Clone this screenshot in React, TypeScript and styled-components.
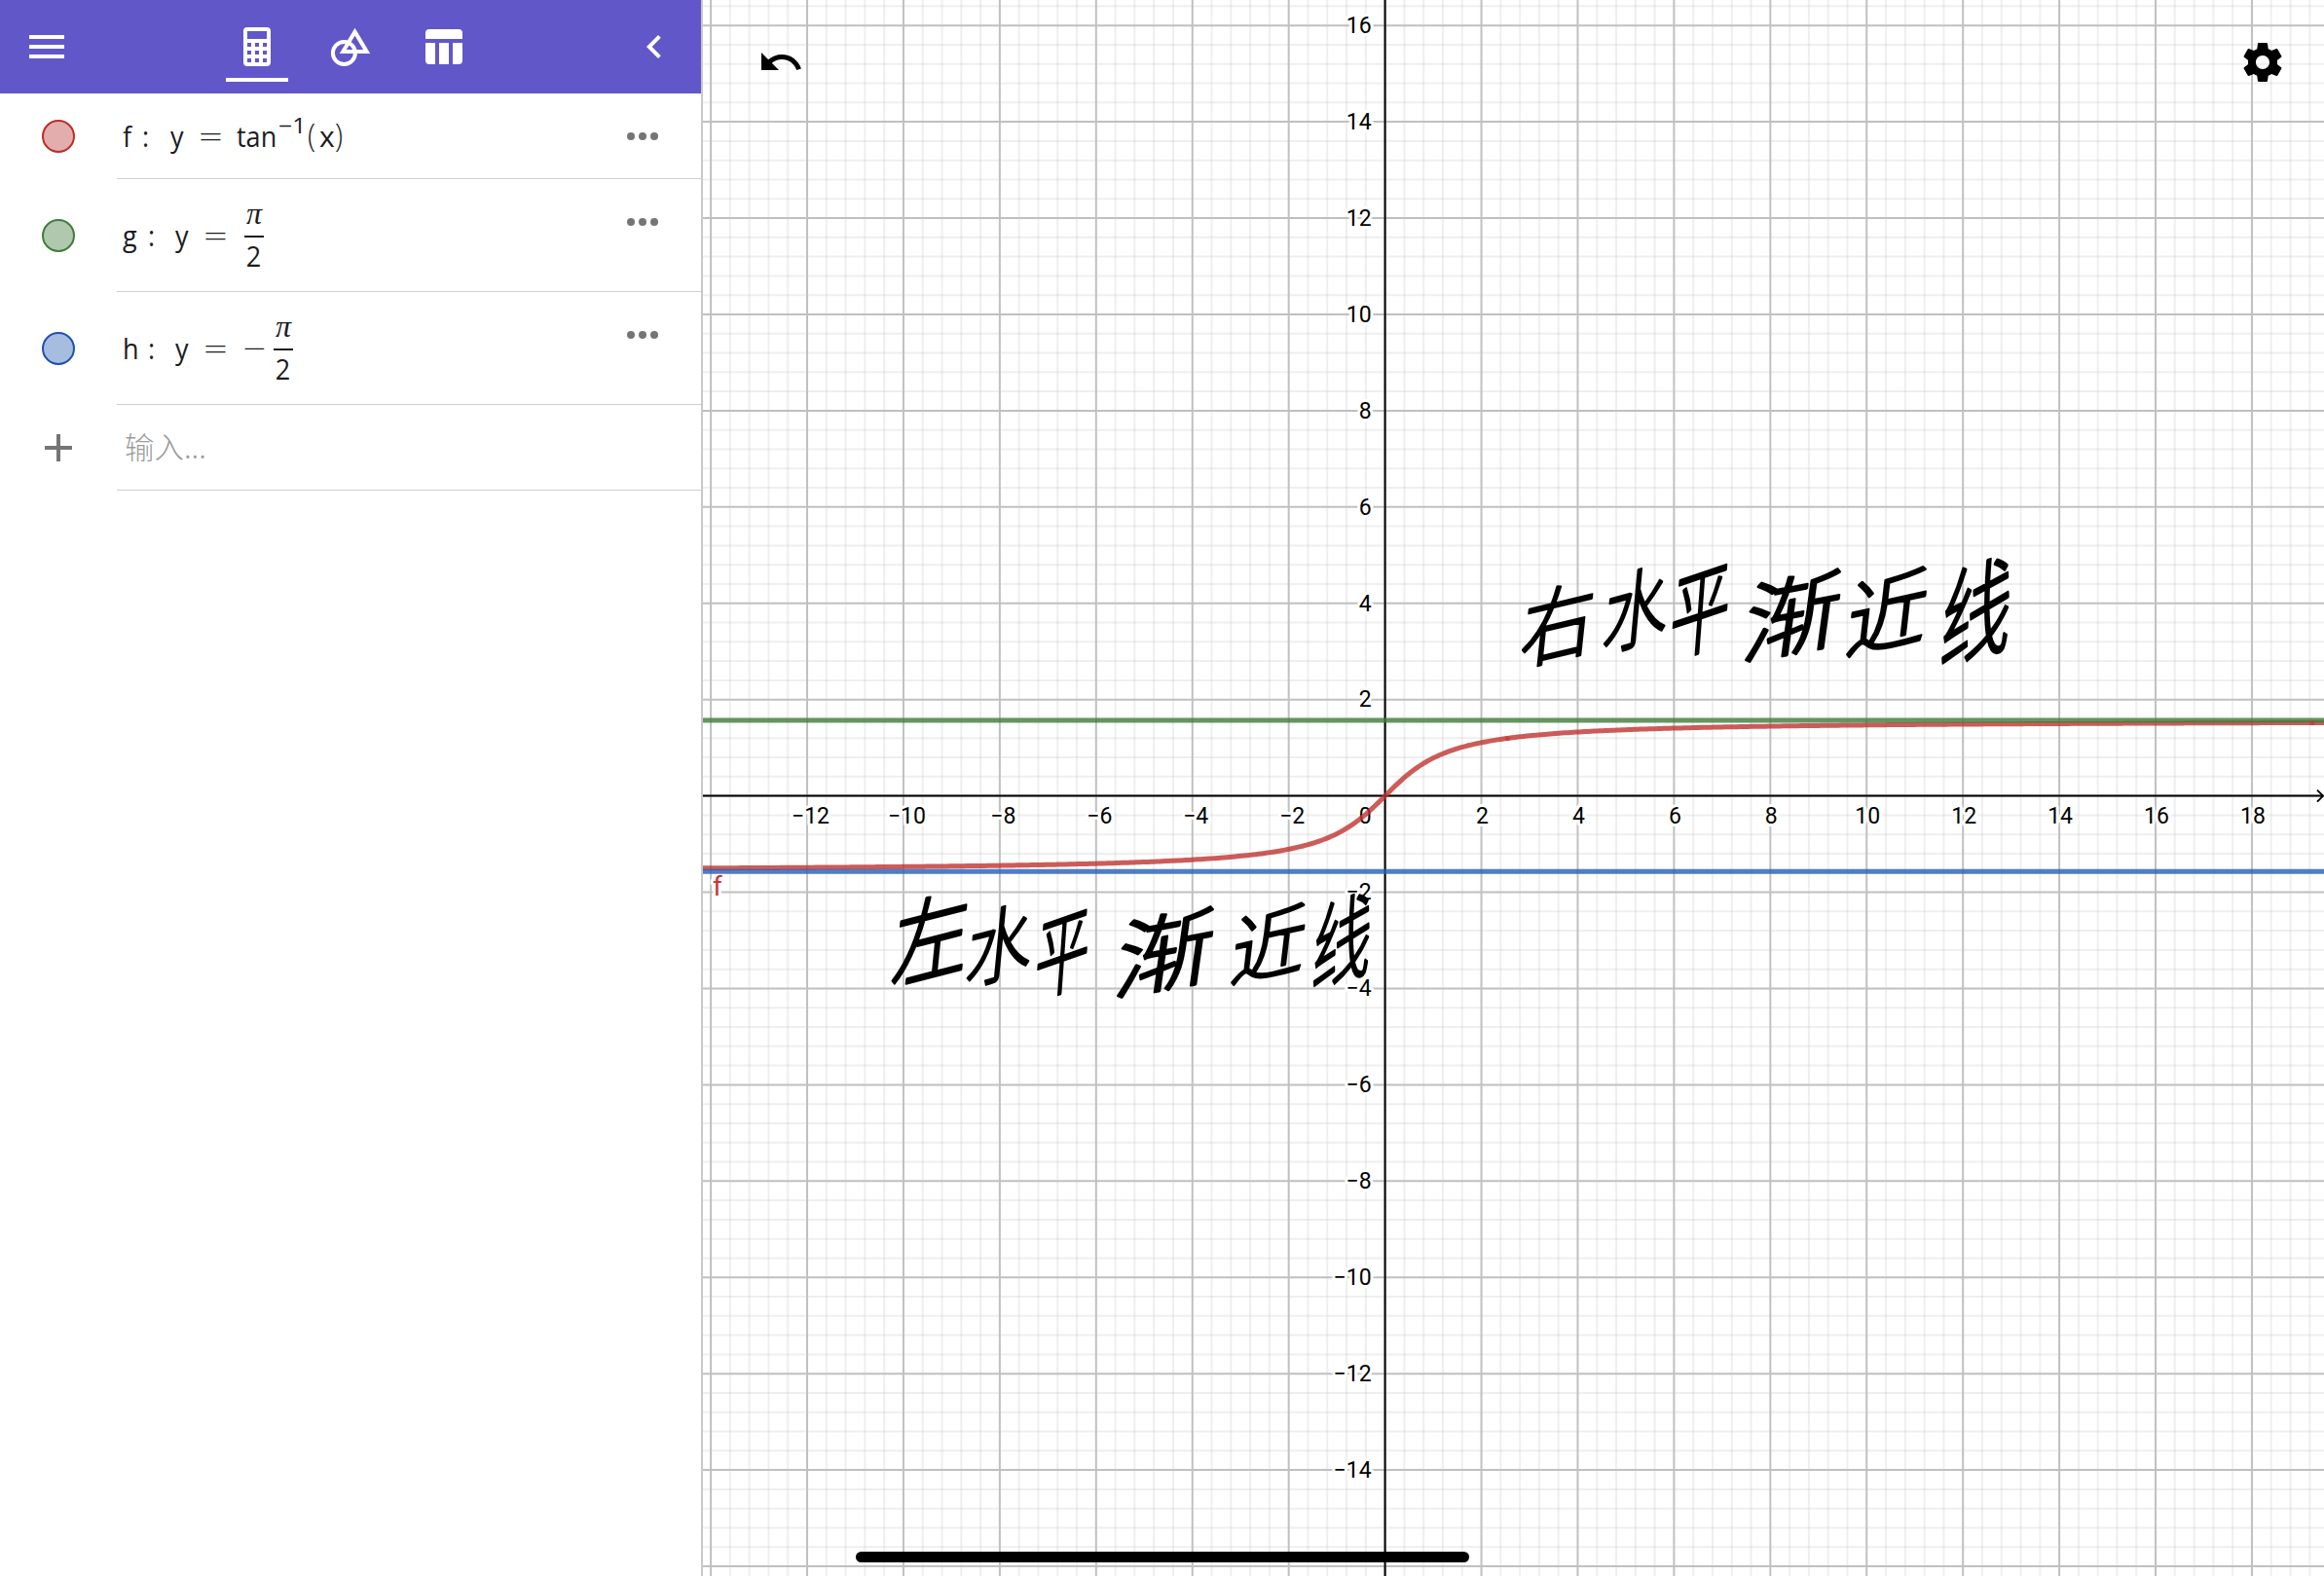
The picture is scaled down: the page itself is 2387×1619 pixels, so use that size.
import React from "react";
import styled, { createGlobalStyle } from "styled-components";

const GlobalStyle = createGlobalStyle`
  html, body { margin: 0; padding: 0; background: #fff; overflow: hidden; }
  * { box-sizing: border-box; }
`;

const Page = styled.main`
  position: relative;
  display: flex;
  width: 2387px;
  height: 1619px;
  overflow: hidden;
  font-family: Roboto, "Noto Sans CJK SC", sans-serif;
`;

const Sidebar = styled.aside`
  display: flex;
  flex-direction: column;
  flex: 0 0 722px;
  border-right: 2px solid #c9c9c9;
  background: #fff;
`;

const Header = styled.header`
  display: flex;
  align-items: flex-start;
  justify-content: space-between;
  height: 96px;
  padding: 0 24px;
  background: #6257c8;
`;

const IconButton = styled.button`
  display: block;
  margin: 24px 0 0;
  padding: 0;
  border: 0;
  background: none;
  line-height: 0;
`;

const Tabs = styled.nav`
  display: flex;
  gap: 32px;
`;

const Tab = styled.button<{ $active?: boolean }>`
  display: flex;
  justify-content: center;
  width: 64px;
  height: 84px;
  padding: 24px 0 0;
  border: 0;
  border-bottom: 4px solid ${(p) => (p.$active ? "#fff" : "transparent")};
  background: none;
`;

const Row = styled.div<{ $h: number }>`
  display: flex;
  height: ${(p) => p.$h}px;
`;

const MarbleCell = styled.div`
  display: flex;
  flex: 0 0 120px;
  align-items: center;
  justify-content: center;
`;

const Marble = styled.span<{ $fill: string; $line: string }>`
  width: 34px;
  height: 34px;
  border: 2px solid ${(p) => p.$line};
  border-radius: 50%;
  background: ${(p) => p.$fill};
`;

const RowBody = styled.div`
  display: flex;
  flex: 1;
  justify-content: space-between;
  padding: 0 44px 0 6px;
  border-bottom: 1px solid #cfcfcf;
`;

const MoreButton = styled.button`
  display: flex;
  gap: 4px;
  height: 8px;
  margin: 40px 0 0;
  padding: 0;
  border: 0;
  background: none;
`;

const Dot = styled.i`
  width: 8px;
  height: 8px;
  border-radius: 50%;
  background: #757575;
`;

const Equation = styled.div`
  display: flex;
  align-items: center;
  color: #1c1c1f;
  font-family: "Open Sans", "Noto Sans", sans-serif;
  font-size: 30px;
  line-height: 40px;
`;

const Token = styled.span<{ $w: number; $sx?: number; $light?: boolean }>`
  display: block;
  width: ${(p) => p.$w}px;
  white-space: nowrap;
  font-weight: ${(p) => (p.$light ? 300 : 400)};
  transform: scaleX(${(p) => p.$sx ?? 0.9});
  transform-origin: left center;
`;

const Sup = styled(Token)`
  font-size: 21.5px;
  margin-top: -22px;
`;

const Paren = styled(Token)`
  font-size: 33px;
  margin-top: -2px;
`;

const Fraction = styled.span`
  display: flex;
  flex-direction: column;
  align-items: center;
  width: 20px;
`;

const Numerator = styled.span`
  height: 33px;
  font-family: "Liberation Serif", serif;
  font-style: italic;
  font-size: 32px;
  line-height: 21px;
`;

const Bar = styled.span`
  width: 20px;
  height: 2px;
  background: #1c1c1f;
`;

const Denominator = styled.span`
  height: 31px;
  line-height: 37px;
  transform: scaleX(0.9);
`;

const InputHint = styled.span`
  display: flex;
  align-items: center;
  padding: 0 0 3px 2px;
  color: #9c9c9c;
  font-family: "Noto Sans CJK SC", sans-serif;
  font-size: 30.5px;
  font-weight: 300;
`;

const GraphPanel = styled.section`
  position: relative;
  flex: 1;
  min-width: 0;
`;

const Plot = styled.svg`
  display: block;
`;

const FloatingButton = styled(IconButton)<{ $left?: number; $right?: number }>`
  position: absolute;
  top: 40px;
  margin: 0;
  ${(p) => (p.$left !== undefined ? `left: ${p.$left}px;` : `right: ${p.$right}px;`)}
`;

const HomeIndicator = styled.div`
  position: absolute;
  left: 879px;
  bottom: 14px;
  width: 630px;
  height: 11px;
  border-radius: 6px;
  background: #000;
`;

const TickLabel = styled.text`
  font-family: Roboto, sans-serif;
  font-size: 23px;
  fill: #000;
  stroke: #fff;
  stroke-width: 6px;
  stroke-linejoin: round;
  paint-order: stroke;
`;

const CurveLabel = styled(TickLabel)`
  font-size: 28px;
  fill: #c43b38;
`;

const InkText = styled.text`
  font-family: "Noto Sans CJK SC", sans-serif;
  font-size: 100px;
  font-weight: 300;
  fill: #000;
  stroke: #000;
  stroke-width: 3px;
  stroke-linejoin: round;
`;

const LEFT = 722;
const W = 1665;
const H = 1619;
const OX = 1422.6 - LEFT;
const OY = 817.6;
const UNIT = 49.465;
const px = (x: number) => OX + x * UNIT;
const py = (y: number) => OY - y * UNIT;

const steps = (from: number, to: number) =>
  Array.from({ length: to - from + 1 }, (_, i) => from + i);
const label = (n: number) => (n < 0 ? `−${-n}` : `${n}`);

const curve = Array.from({ length: 560 }, (_, i) => {
  const x = -14.3 + i * 0.0605;
  return `${i ? "L" : "M"}${px(x).toFixed(2)} ${py(Math.atan(x)).toFixed(2)}`;
}).join("");

type Glyph = [string, number, number, number, number];
// character, left, top, right, bottom of each handwritten character
const notes: Glyph[] = [
  ["右", 1561, 596, 1640, 685],
  ["水", 1645, 579, 1716, 671],
  ["平", 1714, 575, 1779, 678],
  ["渐", 1789, 585, 1895, 679],
  ["近", 1895, 584, 1983, 675],
  ["线", 1992, 571, 2069, 686],
  ["左", 915, 914, 998, 1014],
  ["水", 991, 926, 1063, 1014],
  ["平", 1062, 930, 1121, 1027],
  ["渐", 1144, 932, 1251, 1024],
  ["近", 1263, 929, 1344, 1012],
  ["线", 1347, 916, 1411, 1017],
];

function Ink({ glyph: [ch, l, t, r, b] }: { glyph: Glyph }) {
  const cx = (l + r) / 2 - LEFT;
  const cy = (t + b) / 2;
  return (
    <InkText
      x={-50}
      y={38}
      transform={`translate(${cx} ${cy}) scale(${(r - l) / 106} ${(b - t) / 106}) skewY(-12) skewX(-7)`}
    >
      {ch}
    </InkText>
  );
}

function Graph() {
  return (
    <Plot width={W} height={H} viewBox={`0 0 ${W} ${H}`}>
      <g stroke="#c0c0c0" strokeOpacity={0.25} strokeWidth={2}>
        {steps(-36, 48).filter((i) => i % 5).map((i) => (
          <line key={`v${i}`} x1={px(i * 0.4)} x2={px(i * 0.4)} y1={0} y2={H} />
        ))}
        {steps(-41, 42).filter((i) => i % 5).map((i) => (
          <line key={`h${i}`} x1={0} x2={W} y1={py(i * 0.4)} y2={py(i * 0.4)} />
        ))}
      </g>
      <g stroke="#c0c0c0" strokeWidth={2}>
        {steps(-7, 9).map((i) => (
          <line key={`V${i}`} x1={px(i * 2)} x2={px(i * 2)} y1={0} y2={H} />
        ))}
        {steps(-8, 8).map((i) => (
          <line key={`H${i}`} x1={0} x2={W} y1={py(i * 2)} y2={py(i * 2)} />
        ))}
      </g>
      <g stroke="#000" strokeWidth={2} fill="none">
        <line x1={OX} x2={OX} y1={0} y2={H} />
        <line x1={0} x2={W - 1} y1={OY} y2={OY} />
        <path d={`M${W - 7} ${OY - 6}L${W - 1} ${OY}L${W - 7} ${OY + 6}`} />
      </g>
      {steps(-6, 9).filter((i) => i).map((i) => (
        <TickLabel key={`x${i}`} x={px(i * 2) + (i < 0 ? 3.5 : 1)} y={846} textAnchor="middle">
          {label(i * 2)}
        </TickLabel>
      ))}
      {steps(-7, 8).filter((i) => i).map((i) => (
        <TickLabel key={`y${i}`} x={1408.6 - LEFT} y={py(i * 2) + 7.8} textAnchor="end">
          {label(i * 2)}
        </TickLabel>
      ))}
      <TickLabel x={1408.6 - LEFT} y={846} textAnchor="end">0</TickLabel>
      <CurveLabel x={10} y={920}>f</CurveLabel>
      <g fill="none" strokeWidth={5} strokeOpacity={0.8}>
        <path d={curve} stroke="#bf3330" />
        <line x1={0} x2={W} y1={py(Math.PI / 2)} y2={py(Math.PI / 2)} stroke="#407a3b" />
        <line x1={0} x2={W} y1={py(-Math.PI / 2)} y2={py(-Math.PI / 2)} stroke="#245fba" />
      </g>
      <g fill="#bf3330" fillOpacity={0.6}>
        <circle cx={1548.3 - LEFT} cy={758.8} r={2.5} />
        <circle cx={2375 - LEFT} cy={742.8} r={2.5} />
      </g>
      {notes.map((g, i) => (
        <Ink key={i} glyph={g} />
      ))}
    </Plot>
  );
}

function More() {
  return (
    <MoreButton aria-label="more">
      <Dot /><Dot /><Dot />
    </MoreButton>
  );
}

function HalfPi() {
  return (
    <Fraction>
      <Numerator>π</Numerator>
      <Bar />
      <Denominator>2</Denominator>
    </Fraction>
  );
}

export default function App() {
  return (
    <Page>
      <GlobalStyle />
      <Sidebar>
        <Header>
          <IconButton aria-label="menu">
            <svg width="48" height="48" viewBox="0 0 24 24" fill="#fff">
              <path d="M3 18h18v-2H3v2zm0-5h18v-2H3v2zm0-7v2h18V6H3z" />
            </svg>
          </IconButton>
          <Tabs>
            <Tab $active aria-label="algebra">
              <svg width="48" height="48" viewBox="0 0 48 48">
                <path
                  fill="#fff"
                  fillRule="evenodd"
                  d="M14 4h20a4 4 0 0 1 4 4v32a4 4 0 0 1-4 4H14a4 4 0 0 1-4-4V8a4 4 0 0 1 4-4zM14 8v8h20V8zM14 20v4h4v-4zM22 20v4h4v-4zM30 20v4h4v-4zM14 28v4h4v-4zM22 28v4h4v-4zM30 28v4h4v-4zM14 36v4h4v-4zM22 36v4h4v-4zM30 36v4h4v-4z"
                />
              </svg>
            </Tab>
            <Tab aria-label="tools">
              <svg width="48" height="48" viewBox="0 0 48 48" fill="none" stroke="#fff" strokeWidth="4">
                <circle cx="17.4" cy="30.5" r="11.5" />
                <path d="M28.5 8.6L40.7 29H16.3z" />
              </svg>
            </Tab>
            <Tab aria-label="table">
              <svg width="48" height="48" viewBox="0 0 48 48" fill="#fff">
                <path d="M9 6h30a4 4 0 0 1 4 4v6H5v-6a4 4 0 0 1 4-4zM5 20h10v22H9a4 4 0 0 1-4-4zM19 20h10v22H19zM33 20h10v18a4 4 0 0 1-4 4h-6z" />
              </svg>
            </Tab>
          </Tabs>
          <IconButton aria-label="collapse">
            <svg width="48" height="48" viewBox="0 0 24 24" fill="#fff">
              <path d="M15.41 7.41L14 6l-6 6 6 6 1.41-1.41L10.83 12z" />
            </svg>
          </IconButton>
        </Header>

        <Row $h={88}>
          <MarbleCell><Marble $fill="#e3adad" $line="#b92f2b" /></MarbleCell>
          <RowBody>
            <Equation>
              <Token $w={20}>f</Token>
              <Token $w={29}>:</Token>
              <Token $w={29}>y</Token>
              <Token $w={39} $light $sx={1.45}>=</Token>
              <Token $w={43}>tan</Token>
              <Sup $w={30} $sx={1.15}>−1</Sup>
              <Paren $w={12} $light>(</Paren>
              <Token $w={16} $sx={1}>x</Token>
              <Paren $w={12} $light>)</Paren>
            </Equation>
            <More />
          </RowBody>
        </Row>
        <Row $h={116}>
          <MarbleCell><Marble $fill="#b0c8ae" $line="#417c3b" /></MarbleCell>
          <RowBody>
            <Equation>
              <Token $w={26}>g</Token>
              <Token $w={28}>:</Token>
              <Token $w={29}>y</Token>
              <Token $w={42} $light $sx={1.45}>=</Token>
              <HalfPi />
            </Equation>
            <More />
          </RowBody>
        </Row>
        <Row $h={116}>
          <MarbleCell><Marble $fill="#a6bde0" $line="#1f52ae" /></MarbleCell>
          <RowBody>
            <Equation>
              <Token $w={26}>h</Token>
              <Token $w={28}>:</Token>
              <Token $w={29}>y</Token>
              <Token $w={40} $light $sx={1.45}>=</Token>
              <Token $w={32} $light $sx={1.4}>−</Token>
              <HalfPi />
            </Equation>
            <More />
          </RowBody>
        </Row>
        <Row $h={88}>
          <MarbleCell>
            <svg width="48" height="48" viewBox="0 0 24 24" fill="#757575">
              <path d="M19 13h-6v6h-2v-6H5v-2h6V5h2v6h6v2z" />
            </svg>
          </MarbleCell>
          <RowBody><InputHint>输入...</InputHint></RowBody>
        </Row>
      </Sidebar>

      <GraphPanel>
        <Graph />
        <FloatingButton $left={56} aria-label="undo">
          <svg width="48" height="48" viewBox="0 0 24 24">
            <path d="M12.5 8c-2.65 0-5.05.99-6.9 2.6L2 7v9h9l-3.62-3.62c1.39-1.16 3.16-1.88 5.12-1.88 3.54 0 6.55 2.31 7.6 5.5l2.37-.78C21.08 11.03 17.15 8 12.5 8z" />
          </svg>
        </FloatingButton>
        <FloatingButton $right={39} aria-label="settings">
          <svg width="48" height="48" viewBox="0 0 24 24">
            <path d="M19.43 12.98c.04-.32.07-.64.07-.98s-.03-.66-.07-.98l2.11-1.65c.19-.15.24-.42.12-.64l-2-3.46c-.12-.22-.39-.3-.61-.22l-2.49 1c-.52-.4-1.08-.73-1.69-.98l-.38-2.65C14.46 2.18 14.25 2 14 2h-4c-.25 0-.46.18-.49.42l-.38 2.65c-.61.25-1.17.59-1.69.98l-2.49-1c-.23-.09-.49 0-.61.22l-2 3.46c-.13.22-.07.49.12.64l2.11 1.65c-.04.32-.07.65-.07.98s.03.66.07.98l-2.11 1.65c-.19.15-.24.42-.12.64l2 3.46c.12.22.39.3.61.22l2.49-1c.52.4 1.08.73 1.69.98l.38 2.65c.03.24.24.42.49.42h4c.25 0 .46-.18.49-.42l.38-2.65c.61-.25 1.17-.59 1.69-.98l2.49 1c.23.09.49 0 .61-.22l2-3.46c.12-.22.07-.49-.12-.64l-2.11-1.65zM12 15.5c-1.93 0-3.5-1.57-3.5-3.5s1.57-3.5 3.5-3.5 3.5 1.57 3.5 3.5-1.57 3.5-3.5 3.5z" />
          </svg>
        </FloatingButton>
      </GraphPanel>
      <HomeIndicator />
    </Page>
  );
}
